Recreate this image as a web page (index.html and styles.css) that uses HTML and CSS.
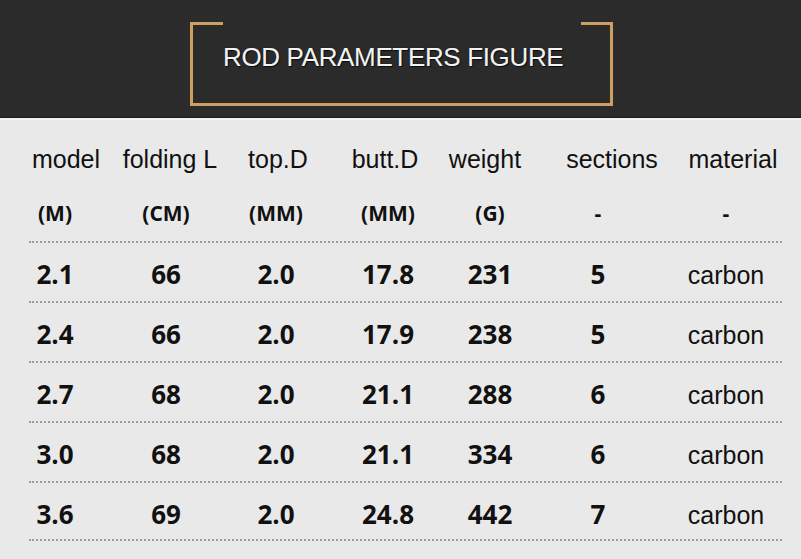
FILE: index.html
```html
<!DOCTYPE html>
<html lang="en">
<head>
<meta charset="utf-8">
<title>Rod Parameters Figure</title>
<link rel="stylesheet" href="styles.css">
</head>
<body>
<header class="banner">
  <div class="frame">
    <h1 class="title">ROD PARAMETERS FIGURE</h1>
  </div>
</header>
<main class="sheet">
  <div class="labels">
    <span>model</span><span>folding L</span><span>top.D</span><span>butt.D</span><span>weight</span><span>sections</span><span>material</span>
  </div>
  <div class="grid units">
    <span>(M)</span><span>(CM)</span><span>(MM)</span><span>(MM)</span><span>(G)</span><span>-</span><span>-</span>
  </div>
  <div class="rule"></div>
  <div class="grid row">
    <span>2.1</span><span>66</span><span>2.0</span><span>17.8</span><span>231</span><span>5</span><span class="mat">carbon</span>
  </div>
  <div class="rule"></div>
  <div class="grid row">
    <span>2.4</span><span>66</span><span>2.0</span><span>17.9</span><span>238</span><span>5</span><span class="mat">carbon</span>
  </div>
  <div class="rule"></div>
  <div class="grid row">
    <span>2.7</span><span>68</span><span>2.0</span><span>21.1</span><span>288</span><span>6</span><span class="mat">carbon</span>
  </div>
  <div class="rule"></div>
  <div class="grid row">
    <span>3.0</span><span>68</span><span>2.0</span><span>21.1</span><span>334</span><span>6</span><span class="mat">carbon</span>
  </div>
  <div class="rule"></div>
  <div class="grid row row-last">
    <span>3.6</span><span>69</span><span>2.0</span><span>24.8</span><span>442</span><span>7</span><span class="mat">carbon</span>
  </div>
  <div class="rule"></div>
</main>
</body>
</html>
```

FILE: styles.css
```css
html, body {
  margin: 0;
  padding: 0;
}

body {
  width: 801px;
  height: 559px;
  overflow: hidden;
  background: #e9e9e9;
  color: #111;
  font-family: "Liberation Sans", Arial, sans-serif;
}

.banner {
  height: 118px;
  background: #2b2b2b;
  border-bottom: 1px solid #1d1d1d;
  padding-top: 22px;
  box-sizing: border-box;
}

.frame {
  margin-left: 190px;
  width: 423px;
  height: 84px;
  box-sizing: border-box;
  border: 3px solid #cf9f62;
  border-top: none;
  background:
    linear-gradient(#cf9f62, #cf9f62) left top / 30px 3px no-repeat,
    linear-gradient(#cf9f62, #cf9f62) right top / 29px 3px no-repeat;
  padding: 20px 0 0 30px;
}

.title {
  margin: 0;
  font-family: "Liberation Sans", Arial, sans-serif;
  font-weight: 400;
  font-size: 26px;
  line-height: 30px;
  letter-spacing: -0.35px;
  color: #f3f3f3;
  text-shadow: 0 0 1px #000, 1px 1px 1px rgba(0,0,0,0.7), 0 0 0.4px #f3f3f3;
  white-space: nowrap;
}

.sheet {
  border-top: 2px solid #f2f2f2;
  padding-top: 24px;
}

.labels {
  display: grid;
  grid-template-columns: 112px 96px 120px 94px 106px 148px 94px;
  padding-left: 10px;
  font-size: 25px;
  line-height: 30px;
  height: 30px;
  white-space: nowrap;
}

.labels span {
  text-align: center;
}

.grid {
  display: grid;
  grid-template-columns: 110px 112px 108px 116px 88px 128px 128px;
  align-items: baseline;
  white-space: nowrap;
}

.grid span {
  text-align: center;
}

.units {
  margin-top: 25px;
  font-family: "Open Sans", "Noto Sans", sans-serif;
  font-weight: 700;
  font-size: 21px;
  line-height: 28px;
  padding-bottom: 14px;
}

.row {
  font-family: "Open Sans", "Noto Sans", sans-serif;
  font-weight: 700;
  font-size: 26px;
  line-height: 36px;
  padding: 13px 0 8px;
}

.row-last {
  padding-bottom: 6px;
}

.row .mat {
  font-family: "Liberation Sans", Arial, sans-serif;
  font-weight: 400;
  font-size: 25px;
}

.rule {
  margin: 0 19px 0 29px;
  border-top: 2px dotted #9c9c9c;
}
```
